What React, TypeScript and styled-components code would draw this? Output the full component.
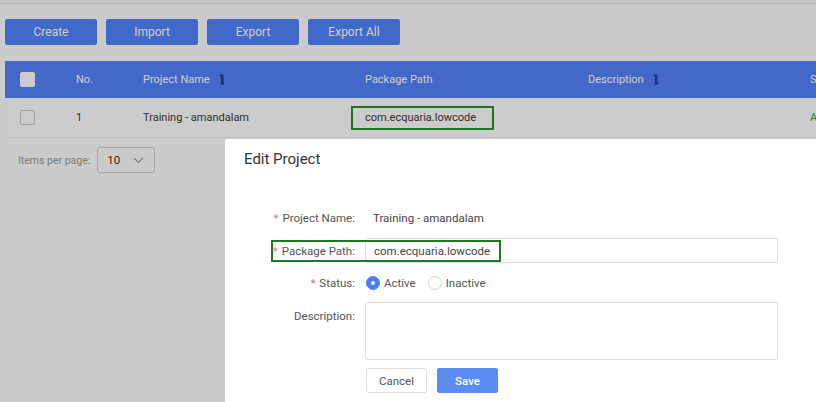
import React from "react";
import styled, { createGlobalStyle } from "styled-components";

const Global = createGlobalStyle`
  html, body { margin: 0; padding: 0; background: #ffffff; overflow: hidden; }
  body { font-family: Roboto, "Liberation Sans", Arial, sans-serif; }
  * { box-sizing: border-box; }
`;

const Page = styled.div`
  position: relative;
  width: 816px;
  height: 402px;
  overflow: hidden;
  background: #fefefe;
`;

const TopBar = styled.div`
  height: 4px;
  background: #fcfcfc;
  border-bottom: 1px solid #dcdcdc;
`;

const Toolbar = styled.div`
  display: flex;
  gap: 9px;
  padding: 15px 0 0 5px;
`;

const ToolButton = styled.button`
  width: 92px;
  height: 26px;
  border: none;
  border-radius: 2px;
  background: #5284fd;
  color: #ffffff;
  font-family: Roboto, "Liberation Sans", Arial, sans-serif;
  font-size: 12px;
  padding: 0;
`;

const Table = styled.div`
  margin: 16px 0 0 5px;
  width: 860px;
`;

const Row = styled.div<{ $head?: boolean }>`
  display: grid;
  grid-template-columns: 56px 67px 222px 223px 222px 1fr;
  align-items: center;
  height: ${(p) => (p.$head ? "37px" : "40px")};
  background: ${(p) => (p.$head ? "#5582fb" : "#ffffff")};
  color: ${(p) => (p.$head ? "#ffffff" : "#3a3a3a")};
  border-bottom: ${(p) => (p.$head ? "none" : "1px solid #eeeeee")};
  font-size: 11px;
`;

const Cell = styled.div<{ $green?: boolean }>`
  padding-left: 15px;
  display: flex;
  align-items: center;
  gap: 9px;
  white-space: nowrap;
  color: ${(p) => (p.$green ? "#2fa33c" : "inherit")};
`;

const Check = styled.span<{ $head?: boolean }>`
  display: inline-block;
  width: 15px;
  height: 15px;
  border-radius: 2px;
  background: #ffffff;
  border: 1px solid ${(p) => (p.$head ? "#ffffff" : "#c8c8c8")};
`;

const PathMark = styled.span`
  margin-left: -14px;
  padding: 3px 12px;
  width: 143px;
  height: 24px;
  display: inline-flex;
  align-items: center;
  border: 2px solid #23922a;
`;

const Pager = styled.div`
  display: flex;
  align-items: center;
  gap: 7px;
  padding: 9px 0 0 18px;
  font-size: 10.5px;
  color: #9a9a9a;
`;

const PageSelect = styled.div`
  width: 58px;
  height: 26px;
  border: 1px solid #d6d6d6;
  border-radius: 2px;
  display: flex;
  align-items: center;
  justify-content: space-between;
  padding: 0 10px 0 9px;
  color: #333;
  font-size: 11.5px;
`;

const Mask = styled.div`
  position: absolute;
  inset: 0;
  background: rgba(0, 0, 0, 0.2);
`;

const Dialog = styled.div`
  position: absolute;
  left: 225px;
  top: 139px;
  width: 640px;
  height: 300px;
  background: #ffffff;
  border-radius: 2px;
  padding: 10px 0 0 19px;
`;

const Title = styled.div`
  font-size: 15px;
  line-height: 20px;
  color: #333333;
`;

const Form = styled.div`
  margin: 36px 0 0 -19px;
  display: flex;
  flex-direction: column;
  gap: 8px;
`;

const FormRow = styled.div<{ $h: number; $top?: boolean }>`
  position: relative;
  display: grid;
  grid-template-columns: 130px 413px;
  column-gap: 10px;
  align-items: ${(p) => (p.$top ? "start" : "center")};
  height: ${(p) => p.$h}px;
  font-size: 11.5px;
`;

const Label = styled.div<{ $pad?: boolean }>`
  text-align: right;
  color: #555555;
  padding-top: ${(p) => (p.$pad ? "7px" : "0")};
`;

const Star = styled.span`
  color: #f56c6c;
  margin-right: 4px;
`;

const Value = styled.div`
  color: #444444;
  padding-left: 8px;
`;

const Input = styled.div<{ $h: number }>`
  height: ${(p) => p.$h}px;
  border: 1px solid #dcdfe6;
  border-radius: 2px;
  padding: 0 8px;
  display: flex;
  align-items: center;
  color: #444444;
  font-size: 11.5px;
`;

const Radios = styled.div`
  display: flex;
  align-items: center;
  gap: 4px;
  padding-left: 1px;
  color: #555555;
`;

const Radio = styled.span<{ $on?: boolean }>`
  width: 14px;
  height: 14px;
  border-radius: 50%;
  border: 1px solid ${(p) => (p.$on ? "#4d7ff2" : "#d4d4d4")};
  background: ${(p) => (p.$on ? "#4d7ff2" : "#ffffff")};
  display: inline-flex;
  align-items: center;
  justify-content: center;
  &::after {
    content: "";
    width: 4px;
    height: 4px;
    border-radius: 50%;
    background: ${(p) => (p.$on ? "#ffffff" : "transparent")};
  }
`;

const RadioText = styled.span`
  margin-right: 8px;
`;

const Annotation = styled.div`
  position: absolute;
  left: 46px;
  top: 2px;
  width: 230px;
  height: 22px;
  border: 2px solid #1d7a24;
  pointer-events: none;
`;

const Actions = styled.div`
  display: flex;
  gap: 10px;
  padding-left: 1px;
`;

const ActBtn = styled.button<{ $primary?: boolean }>`
  width: 61px;
  height: 25px;
  border-radius: 2px;
  border: 1px solid ${(p) => (p.$primary ? "#5b8cf2" : "#dcdfe6")};
  background: ${(p) => (p.$primary ? "#5b8cf2" : "#ffffff")};
  color: ${(p) => (p.$primary ? "#ffffff" : "#555555")};
  font-family: Roboto, "Liberation Sans", Arial, sans-serif;
  font-size: 11.5px;
  font-weight: ${(p) => (p.$primary ? 500 : 400)};
  padding: 0;
`;

const SortIcon = () => (
  <svg width="6" height="13" viewBox="0 0 6 13" fill="none" stroke="#1c3f9e" strokeWidth="1.3">
    <path d="M2.5 12V1.5M2.5 1.5L1 3.2" />
    <path d="M3.8 1.5V11.5M3.8 11.5L5.2 9.8" />
  </svg>
);

const Chevron = () => (
  <svg width="11" height="7" viewBox="0 0 11 7" fill="none" stroke="#9a9a9a" strokeWidth="1.2">
    <path d="M1 1l4.5 4.5L10 1" />
  </svg>
);

export default function App() {
  return (
    <Page>
      <Global />
      <TopBar />
      <Toolbar>
        <ToolButton>Create</ToolButton>
        <ToolButton>Import</ToolButton>
        <ToolButton>Export</ToolButton>
        <ToolButton>Export All</ToolButton>
      </Toolbar>
      <Table>
        <Row $head>
          <Cell><Check $head /></Cell>
          <Cell>No.</Cell>
          <Cell>Project Name <SortIcon /></Cell>
          <Cell>Package Path</Cell>
          <Cell>Description <SortIcon /></Cell>
          <Cell>Status</Cell>
        </Row>
        <Row>
          <Cell><Check /></Cell>
          <Cell>1</Cell>
          <Cell>Training - amandalam</Cell>
          <Cell><PathMark>com.ecquaria.lowcode</PathMark></Cell>
          <Cell></Cell>
          <Cell $green>Active</Cell>
        </Row>
      </Table>
      <Pager>
        Items per page:
        <PageSelect>
          10
          <Chevron />
        </PageSelect>
      </Pager>
      <Mask />
      <Dialog>
        <Title>Edit Project</Title>
        <Form>
          <FormRow $h={25}>
            <Label><Star>*</Star>Project Name:</Label>
            <Value>Training - amandalam</Value>
          </FormRow>
          <FormRow $h={25}>
            <Label><Star>*</Star>Package Path:</Label>
            <Input $h={25}>com.ecquaria.lowcode</Input>
            <Annotation />
          </FormRow>
          <FormRow $h={23}>
            <Label><Star>*</Star>Status:</Label>
            <Radios>
              <Radio $on />
              <RadioText>Active</RadioText>
              <Radio />
              <RadioText>Inactive</RadioText>
            </Radios>
          </FormRow>
          <FormRow $h={58} $top>
            <Label $pad>Description:</Label>
            <Input $h={58} />
          </FormRow>
          <FormRow $h={25}>
            <div />
            <Actions>
              <ActBtn>Cancel</ActBtn>
              <ActBtn $primary>Save</ActBtn>
            </Actions>
          </FormRow>
        </Form>
      </Dialog>
    </Page>
  );
}
